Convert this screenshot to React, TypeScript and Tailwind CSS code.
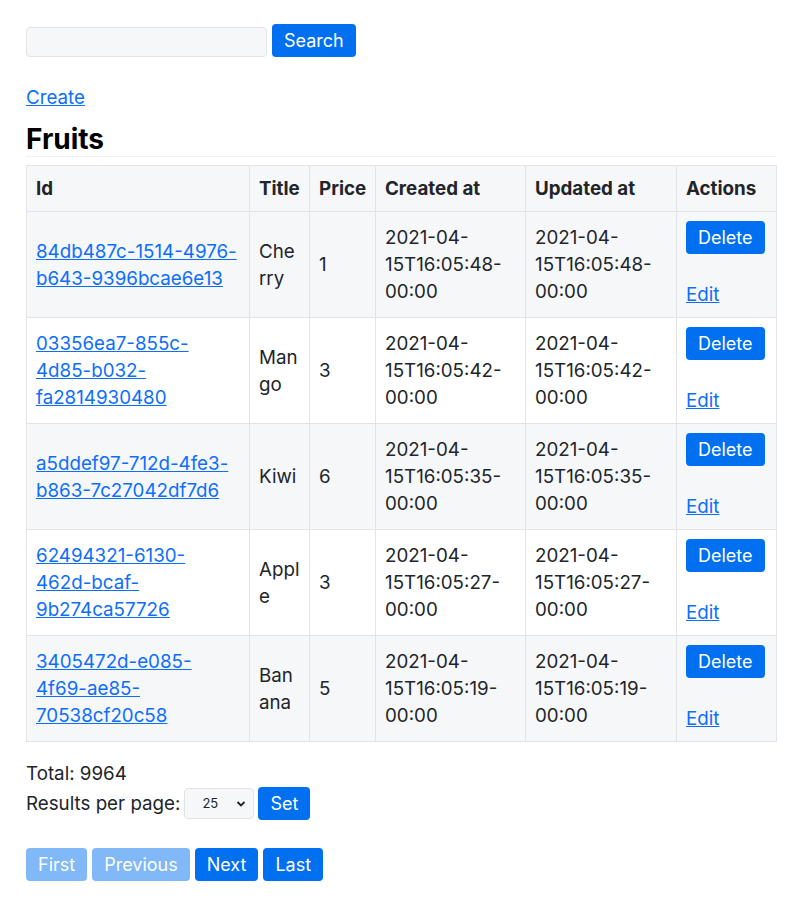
const fruits = [
  { id: '84db487c-1514-4976-b643-9396bcae6e13', title: 'Cherry', price: 1, created: '2021-04-15T16:05:48-00:00', updated: '2021-04-15T16:05:48-00:00' },
  { id: '03356ea7-855c-4d85-b032-fa2814930480', title: 'Mango', price: 3, created: '2021-04-15T16:05:42-00:00', updated: '2021-04-15T16:05:42-00:00' },
  { id: 'a5ddef97-712d-4fe3-b863-7c27042df7d6', title: 'Kiwi', price: 6, created: '2021-04-15T16:05:35-00:00', updated: '2021-04-15T16:05:35-00:00' },
  { id: '62494321-6130-462d-bcaf-9b274ca57726', title: 'Apple', price: 3, created: '2021-04-15T16:05:27-00:00', updated: '2021-04-15T16:05:27-00:00' },
  { id: '3405472d-e085-4f69-ae85-70538cf20c58', title: 'Banana', price: 5, created: '2021-04-15T16:05:19-00:00', updated: '2021-04-15T16:05:19-00:00' },
];

function Btn({ children, disabled }: { children: React.ReactNode; disabled?: boolean }) {
  return (
    <button
      className={
        disabled
          ? 'h-[33px] px-[12px] rounded-[4px] bg-[#80b8f8] text-white text-[18px] leading-[27px]'
          : 'h-[33px] px-[12px] rounded-[4px] bg-[#0070f0] text-white text-[18px] leading-[27px]'
      }
    >
      {children}
    </button>
  );
}

export default function App() {
  return (
    <div className="px-[26px] pt-[24px] pb-[20px] font-['Inter',sans-serif] text-[18.75px] leading-[27px] text-[#212529] bg-white">
      <div className="flex items-end gap-[5px]">
        <input className="w-[241px] h-[30px] bg-[#f6f7f9] border border-[#e1e3e7] rounded-[4px] px-2 outline-none" />
        <Btn>Search</Btn>
      </div>

      <a href="#" className="inline-block mt-[27px] text-[#0d6efd] underline">Create</a>

      <h1 className="mt-[11px] text-[28px] leading-[34px] font-bold text-black border-b border-[#f0f1f3]">Fruits</h1>

      <table className="mt-[8px] w-[750px] table-fixed border-collapse border border-[#e1e3e7]">
        <colgroup>
          <col className="w-[223px]" />
          <col className="w-[60px]" />
          <col className="w-[66px]" />
          <col className="w-[150px]" />
          <col className="w-[151px]" />
          <col className="w-[100px]" />
        </colgroup>
        <thead>
          <tr className="bg-[#f6f7f9]">
            {['Id', 'Title', 'Price', 'Created at', 'Updated at', 'Actions'].map((h) => (
              <th key={h} className="border border-[#e1e3e7] px-[9px] py-[9px] text-left font-bold whitespace-nowrap">
                {h}
              </th>
            ))}
          </tr>
        </thead>
        <tbody>
          {fruits.map((f, i) => (
            <tr key={f.id} className={i % 2 === 0 ? 'bg-[#f6f7f9]' : 'bg-white'}>
              <td className="border border-[#e1e3e7] px-[9px] py-[10px] align-middle break-words">
                <a href="#" className="text-[#0d6efd] underline">{f.id}</a>
              </td>
              <td className="border border-[#e1e3e7] px-[9px] py-[10px] align-middle [overflow-wrap:anywhere]">{f.title}</td>
              <td className="border border-[#e1e3e7] px-[9px] py-[10px] align-middle">{f.price}</td>
              <td className="border border-[#e1e3e7] px-[9px] py-[10px] align-middle break-words">{f.created}</td>
              <td className="border border-[#e1e3e7] px-[9px] py-[10px] align-middle break-words">{f.updated}</td>
              <td className="border border-[#e1e3e7] px-[9px] pt-[9px] pb-[9px] align-top">
                <Btn>Delete</Btn>
                <div className="mt-[27px]">
                  <a href="#" className="text-[#0d6efd] underline">Edit</a>
                </div>
              </td>
            </tr>
          ))}
        </tbody>
      </table>

      <div className="mt-[18px]">Total: 9964</div>
      <div className="flex items-center gap-[4px]">
        <span>Results per page:</span>
        <div className="relative w-[70px] h-[31px] bg-[#f6f7f9] border border-[#e1e3e7] rounded-[4px] flex items-center">
          <span className="pl-[17px] text-[13px] leading-[13px]">25</span>
          <svg className="absolute right-[7px] top-[11px]" width="10" height="8" viewBox="0 0 10 8">
            <path d="M1.5 2 L5 5.5 L8.5 2" fill="none" stroke="#222" strokeWidth="1.8" />
          </svg>
        </div>
        <Btn>Set</Btn>
      </div>

      <div className="mt-[28px] flex gap-[5px]">
        <Btn disabled>First</Btn>
        <Btn disabled>Previous</Btn>
        <Btn>Next</Btn>
        <Btn>Last</Btn>
      </div>
    </div>
  );
}
